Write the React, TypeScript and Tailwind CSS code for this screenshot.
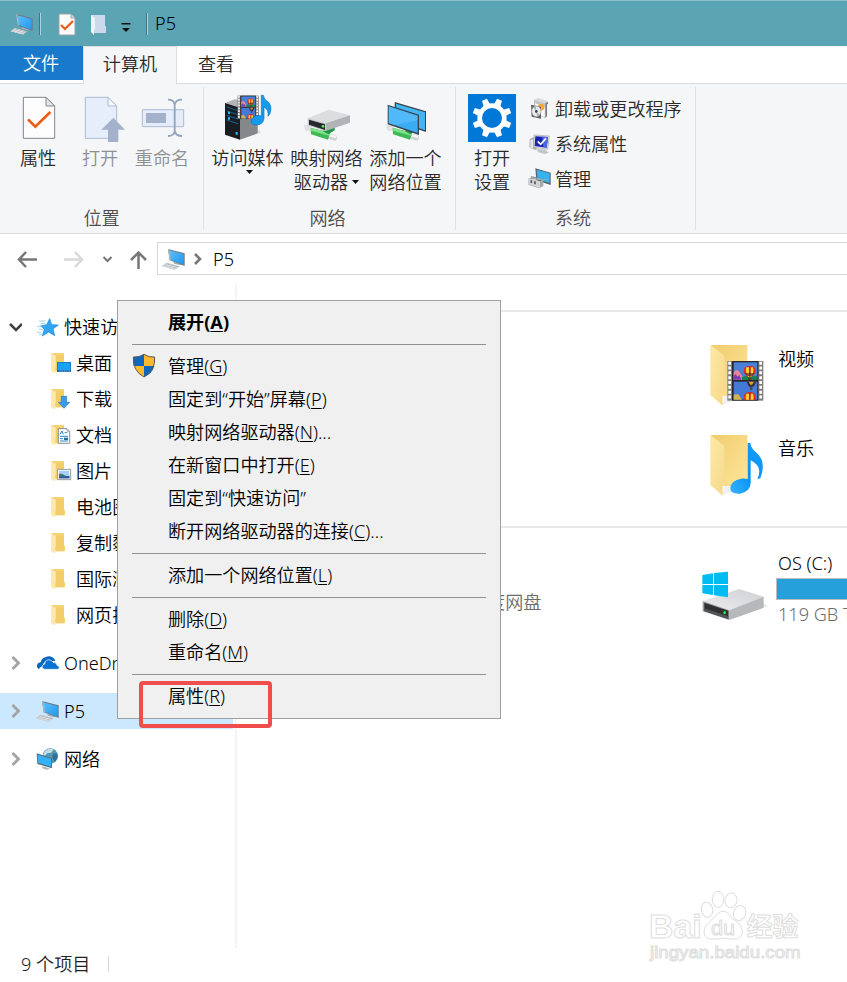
import React from "react";

const font = "font-['Noto_Sans','Noto_Sans_CJK_SC',sans-serif]";

function Computer({ className = "" }: { className?: string }) {
  return (
    <svg className={className} width="24" height="24" viewBox="108 177 72 72">
      <defs>
        <linearGradient id="screen" x1="0" y1="0" x2="1" y2="1">
          <stop offset="0" stopColor="#5cc0fb" />
          <stop offset="1" stopColor="#1f97ef" />
        </linearGradient>
      </defs>
      <path d="M142 221l14 5 14 0-6 6-20-5z" fill="#a9adb1" />
      <path d="M126 183l50 13v38l-45-17z" fill="#6c7b87" />
      <path d="M130 187l43 12v31l-40-15z" fill="url(#screen)" />
      <path d="M126 183l4 1 5 34-4-1z" fill="#aebbc4" />
      <path d="M108 235l14-11 39 11-15 10z" fill="#b4b8bc" />
      <path d="M115 234l35 9M120 230l34 9M126 227l-14 9M137 229l-14 10M148 232l-14 10" stroke="#eceeef" strokeWidth="2" />
    </svg>
  );
}

type Badge = "desktop" | "download" | "docs" | "pictures" | "none";

function SmallFolder({ badge }: { badge: Badge }) {
  return (
    <svg width="24" height="24" viewBox="150 33 72 72">
      <path d="M154 39h38v38h3v17h-32z" fill="#f5d474" />
      <path d="M168 46h24v48h-24z" fill="#edc862" opacity=".55" />
      <path d="M153 39l14 10v30l-2 3v20l-12-10z" fill="#ffe9a6" />
      {badge === "desktop" && (
        <>
          <rect x="171" y="66" width="42" height="30" fill="#1d6fb0" />
          <rect x="173" y="68" width="38" height="22" fill="#18a0fb" />
          <path d="M178 93h24M206 93h4" stroke="#9fe0ff" strokeWidth="2" strokeDasharray="4 3" />
        </>
      )}
      {badge === "download" && (
        <path d="M184 61h16v18h9l-17 18-17-18h9z" fill="#3c9be9" stroke="#267dcb" strokeWidth="2" />
      )}
      {badge === "docs" && (
        <>
          <path d="M175 50h26l8 8v36h-34z" fill="#fff" stroke="#8a8f94" strokeWidth="3" />
          <path d="M201 50v8h8" fill="none" stroke="#8a8f94" strokeWidth="2" />
          <path d="M180 67l6-10 4 10M194 62h8M180 73h24M180 80h9M180 87h24" stroke="#2584c6" strokeWidth="3" fill="none" />
          <path d="M192 77h12v7h-12z" fill="#2b6d8f" />
        </>
      )}
      {badge === "pictures" && (
        <>
          <rect x="173" y="64" width="39" height="31" fill="#fff" stroke="#989ca0" strokeWidth="3" />
          <rect x="177" y="68" width="31" height="23" fill="#a8d2f5" />
          <path d="M177 78q10-2 15 3t16 2v8h-31z" fill="#3f7378" />
          <path d="M177 87l31-3v7h-31z" fill="#2d5aa2" />
        </>
      )}
    </svg>
  );
}

function FilmStrip() {
  return (
    <>
      <rect x="113" y="93" width="108" height="119" fill="#7f7f7f" />
      <path d="M120 95v116M213 95v116" stroke="#fff" strokeWidth="8" strokeDasharray="9 5.5" />
      <rect x="127" y="93" width="79" height="119" fill="#282828" />
      <rect x="132" y="97" width="71" height="53" fill="#4b80d8" />
      <rect x="132" y="155" width="71" height="54" fill="#4579d6" />
      <path d="M132 127l8-8 8 5 6 10 8 8v8h-30z" fill="#e78695" />
      <path d="M132 138l6-6 5 8 6-5 6 14h-23z" fill="#783fb4" />
      <path d="M156 141l14-3 33 1v11h-46z" fill="#17804d" />
      <path d="M162 123q0-15 18-15t18 15q-1 11-14 18h-8q-13-7-14-18z" fill="#df2a25" />
      <path d="M170 112q-4 14 5 28h10q9-14 5-28z" fill="#ffd02e" />
      <path d="M178 109v31h5v-31z" fill="#bb2020" />
      <path d="M165 129h30l-8 9h-14z" fill="#3d3023" opacity=".65" />
      <path d="M176 143h9v7h-9z" fill="#64341b" />
      <path d="M171 155h28q-2 11-11 17h-7q-8-6-10-17z" fill="#373036" />
      <path d="M177 155l5 9h5l6-9z" fill="#e1a12e" />
      <path d="M181 173h7v6h-7z" fill="#672e1d" />
      <path d="M162 209v-8q2-15 18-15t18 15v8z" fill="#df2a25" />
      <path d="M170 191q-3 8-1 18h22q2-10-1-18z" fill="#ffd02e" />
      <path d="M178 187v22h5v-22z" fill="#bb2020" />
      <path d="M132 194l13-2 12 17h-25z" fill="#d5b44f" />
    </>
  );
}

function LargeFolder({ kind }: { kind: "video" | "music" }) {
  return (
    <svg width="60" height="70" viewBox="52 30 180 210">
      <defs>
        <linearGradient id="folderBack" x1="0" y1="0" x2="1" y2="1">
          <stop offset="0" stopColor="#efcc6d" />
          <stop offset="1" stopColor="#ffe69a" />
        </linearGradient>
        <linearGradient id="folderFront" x1="0" y1="0" x2="1" y2="1">
          <stop offset="0" stopColor="#ffe9a7" />
          <stop offset="1" stopColor="#f5d98b" />
        </linearGradient>
        <linearGradient id="note" x1="1" y1="0" x2="0" y2="1">
          <stop offset="0" stopColor="#159df9" />
          <stop offset=".55" stopColor="#0a93f5" />
          <stop offset="1" stopColor="#35b2ff" />
        </linearGradient>
      </defs>
      <path d="M98 226l40-17 10-10-44-2z" fill="#f1f1f1" />
      <path d="M63 45h110v153H63z" fill="url(#folderBack)" />
      <path d="M63 45l41 32v106q-5 5-5 12v32l-36-31z" fill="url(#folderFront)" />
      {kind === "video" ? (
        <FilmStrip />
      ) : (
        <path d="M174 69h8q2 16 17 28 33 27 13 78l-9 2q18-38-20-56v68q-1 26-32 32-29 2-29-17 2-23 32-28 10-2 20 1z" fill="url(#note)" />
      )}
    </svg>
  );
}

function DiskIcon() {
  return (
    <svg width="66" height="52" viewBox="36 90 198 156">
      <defs>
        <linearGradient id="diskTop" x1="0" y1="1" x2="1" y2="0">
          <stop offset="0" stopColor="#ededef" />
          <stop offset="1" stopColor="#cfd0d3" />
        </linearGradient>
      </defs>
      <path d="M117 240l109-38 10-4-20-10z" fill="#ececec" />
      <path d="M38 183l109-36 74 23-103 42z" fill="url(#diskTop)" />
      <path d="M118 211l103-41v33l-103 37z" fill="#b7b8bb" />
      <path d="M38 183l80 28v29l-80-26z" fill="#999b9e" />
      <path d="M43 188l72 24v25l-72-24z" fill="#2e3032" />
      <path d="M43 205l72 24v8l-72-24z" fill="#525456" />
      <circle cx="104" cy="218" r="4" fill="#2cff55" />
      <path d="M37 105l32-5v32H37zM72 99l42-4v37H72zM37 135h32v30l-32-5zM72 135h42v37l-42-6z" fill="#00bcf2" />
    </svg>
  );
}

function NetworkCable() {
  return (
    <>
      <path d="M298 123l20-1 8 18-22 1q-9-7-6-18z" fill="#dfe1e3" />
      <path d="M370 148l23 5q6 8-1 17l-24-6z" fill="#d0d2d4" />
      <path d="M376 151l18 4-2 7-20-5z" fill="#fafafa" />
      <path d="M317 131l58 15-6 21-51-16z" fill="#3fb955" />
      <path d="M319 132l56 15-2 8-55-15z" fill="#7ee28a" />
      <path d="M352 140l37-10v9l-19 12z" fill="#22954a" />
    </>
  );
}

const ServerIcon = () => (
  <svg width="79" height="48" viewBox="9 30 237 144">
    <path d="M104 167l65-21-12-12z" fill="#dadbde" />
    <path d="M60 57l30-11 62 8-45 18z" fill="#b2b4b7" />
    <path d="M104 72l54-13v89l-54 19z" fill="#85878a" />
    <path d="M60 57l45 14v96l-45-15z" fill="#191c20" />
    <path d="M65 69l34 11M65 81l34 11M65 94l34 11M65 108l34 11" stroke="#1689ce" strokeWidth="2" />
    <path d="M69 83h6v7h-6zM69 100h6v7h-6zM92 144h6v8h-6z" fill="#26bfff" />
    <g transform="translate(31 -20) scale(.59)"><FilmStrip /></g>
    <path d="M169 34h6q2 13 13 19 15 11 7 36l-6 8q3-20-12-28v34q-2 19-22 20-18 0-16-12 3-15 20-17l10 2z" fill="#1599ef" stroke="#0875c5" strokeWidth="2" />
  </svg>
);

const MapDriveIcon = () => (
  <svg width="79" height="48" viewBox="246 30 237 144">
    <NetworkCable />
    <path d="M308 103l62-26 65 17-73 24z" fill="#dcdddf" />
    <path d="M362 118l73-24v22l-73 25z" fill="#b1b3b6" />
    <path d="M308 102l54 16v24l-54-18z" fill="#c6c8ca" />
    <path d="M312 107l48 14v17l-48-16z" fill="#26292b" />
    <circle cx="354" cy="127" r="4" fill="#4aff52" />
  </svg>
);

const AddNetworkIcon = () => (
  <svg width="79" height="48" viewBox="483 30 237 144">
    <g transform="translate(246 0)"><NetworkCable /></g>
    <path d="M569 54l94 28v62l-94-32z" fill="#3b4249" />
    <path d="M573 59l87 26v54l-87-30z" fill="#43b5f4" />
    <path d="M548 62l94 30v61l-94-32z" fill="#39434b" />
    <path d="M551 67l87 28v52l-87-30z" fill="#39acf4" />
    <path d="M551 67l87 28v14l-70 15-17-7z" fill="#69c6fd" opacity=".5" />
  </svg>
);

const PropertiesIcon = () => (
  <svg width="62" height="48" viewBox="21 30 186 144">
    <path d="M70 40h68l26 26v97H70z" fill="#fdfdfd" stroke="#84878a" strokeWidth="3" />
    <path d="M138 40v26h26z" fill="#e4e6e8" stroke="#84878a" strokeWidth="3" />
    <path d="M84 106l22 22 45-44" fill="none" stroke="#f05a14" strokeWidth="8" />
  </svg>
);

const OpenIcon = () => (
  <svg width="62" height="48" viewBox="207 30 186 144">
    <path d="M256 40h68l26 26v97h-94z" fill="#e6eefb" stroke="#aebbd2" strokeWidth="3" />
    <path d="M324 40v26h26z" fill="#f5f8fd" stroke="#aebbd2" strokeWidth="3" />
    <path d="M340 101l35 36h-20v37h-31v-37h-20z" fill="#a3b1cb" />
  </svg>
);

const RenameIcon = () => (
  <svg width="62" height="48" viewBox="393 30 186 144">
    <path d="M427 77h124v51H427z" fill="#e5edfa" stroke="#aebbd2" strokeWidth="3" />
    <path d="M438 87h60v30h-60z" fill="#a3b1cb" />
    <path d="M504 47q18 0 20 15 3-15 22-15M524 60v83M504 156q18 0 20-15 3 15 22 15" fill="none" stroke="#92a3c0" strokeWidth="5.5" />
  </svg>
);

const teeth = [22.5, 67.5, 112.5, 157.5, 202.5, 247.5, 292.5, 337.5];

const SettingsIcon = () => (
  <svg width="48" height="48" viewBox="39 30 144 144">
    <path d="M39 30h144v144H39z" fill="#0078d7" />
    <circle cx="111" cy="102" r="37" fill="none" stroke="#fff" strokeWidth="14" />
    {teeth.map((angle) => (
      <path key={angle} d="M101 61l2-18h16l2 18z" fill="#fff" transform={`rotate(${angle} 111 102)`} />
    ))}
  </svg>
);

const UninstallIcon = () => (
  <svg width="24" height="24" viewBox="219 42 72 72">
    <path d="M237 50l13-5 29 10-8 6z" fill="#d8d9da" />
    <path d="M237 50l34 11v45l-35-16z" fill="#c3c5c7" />
    <path d="M271 61l8-5v6l-3 2v35l-5 7z" fill="#77797c" />
    <path d="M240 61l29 10v32l-28-12z" fill="#fff" />
    <circle cx="258" cy="73" r="10" fill="#f6a72f" />
    <path d="M228 65l30 7v35l-28-6z" fill="#5e6063" />
    <ellipse cx="244" cy="85" rx="14" ry="16" fill="#e8eaeb" stroke="#979b9e" strokeWidth="2" />
    <path d="M244 84l-10-11 8-4zM244 86l10 10-7 5z" fill="#adb5b5" />
    <ellipse cx="244" cy="85" rx="4" ry="5" fill="#454b50" />
  </svg>
);

const SystemIcon = () => (
  <svg width="24" height="24" viewBox="219 147 72 72">
    <path d="M224 169l14-8 7 4v36l-15-3-7-6z" fill="#a9abad" />
    <path d="M226 171l8-2v29l-8-4z" fill="#e4e4e5" />
    <path d="M247 197l24 3 10 9-11 4-22-6z" fill="#c2c5c7" />
    <path d="M237 156l46 3-5 40-42-7z" fill="#dfdfdf" stroke="#a7a7ad" strokeWidth="2" />
    <path d="M241 160l38 2-4 32-36-5z" fill="#1723ae" />
    <path d="M261 161l18 1-4 32-10-2z" fill="#4965ea" />
    <path d="M248 175l9 9 16-18" fill="none" stroke="#fff" strokeWidth="5" />
  </svg>
);

const ManageIcon = () => (
  <svg width="24" height="24" viewBox="219 252 72 72">
    <path d="M241 256l46 13v37l-43-14z" fill="#56636d" />
    <path d="M245 260l39 11v29l-37-12z" fill="#39b1ef" />
    <path d="M220 288l15-6 30 8 16-3-15 7-17-4z" fill="#a8abad" />
    <path d="M220 287l35 8 10-5v19l-13 7-32-11z" fill="#a5a9ac" />
    <path d="M220 287l35 8v20l-35-11z" fill="#d2d4d5" />
    <path d="M229 286v-5l15 3v6" fill="none" stroke="#8b8f92" strokeWidth="3" />
    <path d="M229 292v8M240 295v9" fill="none" stroke="#55595c" strokeWidth="5" />
  </svg>
);

function Down({ className = "" }: { className?: string }) {
  return (
    <svg className={className} width="7" height="4" viewBox="0 0 7 4">
      <path d="M0 0h7L3.5 4z" fill="#111" />
    </svg>
  );
}

function BigButton({ icon, lines, arrow, width, disabled }: {
  icon: React.ReactNode;
  lines: string[];
  arrow?: "below" | "inline";
  width: string;
  disabled?: boolean;
}) {
  return (
    <div className={`flex shrink-0 flex-col items-center ${width} ${disabled ? "text-[#8e9092]" : "text-[#2a2a2a]"}`}>
      {icon}
      <div className="mt-1 flex flex-col items-center whitespace-nowrap leading-6">
        {lines.map((line, i) => (
          <span key={line} className="flex items-center">
            {line}
            {arrow === "inline" && i === lines.length - 1 && <Down className="ml-1" />}
          </span>
        ))}
      </div>
      {arrow === "below" && <Down className="ml-1" />}
    </div>
  );
}

function RibbonGroup({ label, className, children }: { label: string; className: string; children: React.ReactNode }) {
  return (
    <div className={`flex shrink-0 flex-col border-r border-[#dfe2e5] ${className}`}>
      <div className="flex h-[116px]">{children}</div>
      <div className="text-center leading-6 text-[#4c4c4c]">{label}</div>
    </div>
  );
}

function Ribbon() {
  return (
    <div className="flex h-[150px] border-b border-[#d9dbdd] bg-[#f5f6f7] pb-[3px] pt-[3px]">
      <RibbonGroup label="位置" className="w-[204px] pt-[7px] [&>div:first-child]:pl-[7px]">
        <BigButton icon={<PropertiesIcon />} lines={["属性"]} width="w-[62px]" />
        <BigButton icon={<OpenIcon />} lines={["打开"]} width="w-[62px]" disabled />
        <BigButton icon={<RenameIcon />} lines={["重命名"]} width="w-[62px]" disabled />
      </RibbonGroup>
      <RibbonGroup label="网络" className="w-[252px] pt-[7px] pr-1 [&>div:first-child]:pl-1">
        <BigButton icon={<ServerIcon />} lines={["访问媒体"]} width="w-[79px]" arrow="below" />
        <BigButton icon={<MapDriveIcon />} lines={["映射网络", "驱动器"]} width="w-[79px]" arrow="inline" />
        <BigButton icon={<AddNetworkIcon />} lines={["添加一个", "网络位置"]} width="w-[79px]" />
      </RibbonGroup>
      <RibbonGroup label="系统" className="w-60 pt-[7px] pr-[5px] [&>div:first-child]:pl-3">
        <BigButton icon={<SettingsIcon />} lines={["打开", "设置"]} width="w-12" />
        <div className="-mt-[3px] ml-3 flex flex-col text-[#2a2a2a]">
          {[
            { icon: <UninstallIcon />, text: "卸载或更改程序" },
            { icon: <SystemIcon />, text: "系统属性" },
            { icon: <ManageIcon />, text: "管理" },
          ].map((item) => (
            <div key={item.text} className="flex h-[35px] items-center whitespace-nowrap leading-6">
              {item.icon}
              <span className="ml-[3px]">{item.text}</span>
            </div>
          ))}
        </div>
      </RibbonGroup>
    </div>
  );
}

function TitleBar() {
  return (
    <div className="flex h-[46px] items-center border-t border-[#8bbfc9] bg-[#5ba4b3] pl-[10px]">
      <Computer />
      <span className="ml-[5px] h-[22px] w-[2px] border-r border-[#aed2d9] bg-[#3d7884]" />
      <svg className="ml-[17px] mt-px" width="18" height="23" viewBox="0 0 18 23">
        <path d="M1 1h12l4 4v17H1z" fill="#fcfcfc" stroke="#98a2a7" />
        <path d="M13 1v4h4" fill="#ddd" stroke="#98a2a7" />
        <path d="M3 12l4 4 8-8" fill="none" stroke="#ee5a17" strokeWidth="2.2" />
      </svg>
      <svg className="ml-[15px] mt-[2px]" width="16" height="22" viewBox="0 0 16 22">
        <path d="M0 1h14v11h1v7H3z" fill="#ccd9ec" />
        <path d="M0 1l4 3v11l-1 1v5l-3-3z" fill="#eef3fa" />
      </svg>
      <svg className="ml-[14px] mt-[9px]" width="10" height="10" viewBox="0 0 10 10">
        <path d="M.5 0h9v1.500h-9zM1 5h8L5 9z" fill="#111" />
      </svg>
      <span className="ml-[15px] h-[22px] w-[2px] border-r border-[#aed2d9] bg-[#3d7884]" />
      <span className="mb-[2px] ml-[7px] leading-6 text-black">P5</span>
    </div>
  );
}

function Tabs() {
  return (
    <div className="flex h-[38px] border-b border-[#dadcde] bg-white leading-6">
      <div className="flex h-[34px] w-[83px] items-center justify-center bg-[#1979ca] pb-px pr-px text-white">文件</div>
      <div className="z-10 flex h-[38px] w-[94px] items-center justify-center border-x border-t border-[#dadcde] bg-[#f5f6f7] pb-[3px] text-[#2a2a2a]">计算机</div>
      <div className="flex h-[37px] w-[78px] items-center justify-center pb-[2px] text-[#2a2a2a]">查看</div>
    </div>
  );
}

function Chevron({ open }: { open?: boolean }) {
  return (
    <svg width="14" height="14" viewBox="0 0 14 14">
      {open ? (
        <path d="M2 4l6 6 6-6" fill="none" stroke="#404040" strokeWidth="2.5" />
      ) : (
        <path d="M4.5 1l6 6-6 6" fill="none" stroke="#a3a3a3" strokeWidth="2.8" />
      )}
    </svg>
  );
}

function AddressBar() {
  return (
    <div className="flex h-[49px] shrink-0 items-center bg-white">
      <svg className="ml-[17px] mt-px" width="132" height="30" viewBox="17 0 132 30" fill="none" strokeWidth="2.5">
        <path d="M37 15.5H19M26 8l-7 7.5 7 7.5" stroke="#777" />
        <path d="M64 15.5h18M75 8l7 7.5-7 7.5" stroke="#d9d9d9" />
        <path d="M103.5 13l4 4 4-4" stroke="#777" strokeWidth="2" />
        <path d="M138.5 25V9M131 16l7.5-7.5L146 16" stroke="#777" />
      </svg>
      <div className="ml-2 flex h-[33px] flex-1 items-center border border-r-0 border-[#d9d9d9]">
        <Computer className="ml-1" />
        <svg className="ml-2 mt-px" width="9" height="12" viewBox="0 0 9 12">
          <path d="M1 1l5 5-5 5" fill="none" stroke="#777" strokeWidth="2.6" />
        </svg>
        <span className="ml-[10px] leading-6">P5</span>
      </div>
    </div>
  );
}

const folders: { name: string; badge: Badge }[] = [
  { name: "桌面", badge: "desktop" },
  { name: "下载", badge: "download" },
  { name: "文档", badge: "docs" },
  { name: "图片", badge: "pictures" },
  { name: "电池图", badge: "none" },
  { name: "复制黏", badge: "none" },
  { name: "国际涨", badge: "none" },
  { name: "网页把", badge: "none" },
];

const QuickAccessIcon = () => (
  <svg width="24" height="24" viewBox="108 243 72 72">
    <path d="M149 254l6 18 20 1-16 12 5 20-18-11-19 12 6-20-11-10 18-4z" fill="#31a5f2" stroke="#1486d6" strokeWidth="2" />
    <path d="M117 261h20M121 268h15M112 277h18M117 286h13M111 295h13M117 302h9" stroke="#6fbced" strokeWidth="2" />
  </svg>
);

const OneDriveIcon = () => (
  <svg width="24" height="24" viewBox="108 33 72 72">
    <path d="M117 87q-8-4-6-12 2-7 11-8 2-12 14-15 11-6 20-1 9 4 10 13-7-2-12 2-9-7-19-1-7 5-7 13-8 3-11 9z" fill="#0a68c0" />
    <path d="M134 88q-7-1-8-7 0-7 8-9 0-10 10-13 10-1 15 8 11-1 12 9 7 2 7 7 0 5-6 5z" fill="#0b73d3" stroke="#fff" strokeWidth="2" />
  </svg>
);

const NetworkIcon = () => (
  <svg width="24" height="24" viewBox="108 321 72 72">
    <circle cx="151" cy="348" r="23" fill="#5297b6" />
    <path d="M139 330q12-7 22-2l-7 10-13 2-6 8-6-2q2-10 10-16z" fill="#c2dde3" />
    <path d="M159 340l13 2q3 14-8 23l-7-11z" fill="#2f7195" />
    <path d="M110 340l46 14v31l-44-13z" fill="#55707e" />
    <path d="M113 344l40 12v24l-39-12z" fill="#37b0fa" />
    <path d="M128 379l15 4 8 3-12 4-14-6z" fill="#b9bcbe" />
  </svg>
);

function TreeRow({ icon, text, open, selected, className = "" }: {
  icon: React.ReactNode;
  text: string;
  open?: boolean;
  selected?: boolean;
  className?: string;
}) {
  return (
    <div className={`flex h-9 w-[233px] shrink-0 items-center whitespace-nowrap ${selected ? "bg-[#cce8ff]" : ""} ${className}`}>
      <span className="ml-2 mr-[14px]"><Chevron open={open} /></span>
      {icon}
      <span className="ml-1 leading-6">{text}</span>
    </div>
  );
}

function Sidebar() {
  return (
    <div className="h-[665px] w-[237px] shrink-0 overflow-hidden border-r-2 border-[#f5f5f5] pt-[26px]">
      <TreeRow icon={<QuickAccessIcon />} text="快速访问" open />
      {folders.map((folder) => (
        <div key={folder.name} className="flex h-9 items-center pl-[50px]">
          <SmallFolder badge={folder.badge} />
          <span className="ml-[2px] leading-6">{folder.name}</span>
        </div>
      ))}
      <TreeRow className="mt-3" icon={<OneDriveIcon />} text="OneDrive" />
      <TreeRow className="mt-3" icon={<Computer />} text="P5" selected />
      <TreeRow className="mt-3" icon={<NetworkIcon />} text="网络" />
    </div>
  );
}

function Content() {
  return (
    <div className="flex min-w-0 flex-1 flex-col overflow-hidden">
      <div className="mt-[27px] flex h-[216px] flex-col gap-5 border-t-2 border-[#e8e8e8] pl-[470px] pt-7">
        <div className="flex h-[70px]">
          <LargeFolder kind="video" />
          <span className="ml-[11px] mt-[7px] whitespace-nowrap leading-6">视频</span>
        </div>
        <div className="flex h-[70px]">
          <LargeFolder kind="music" />
          <span className="ml-[11px] mt-[6px] whitespace-nowrap leading-6">音乐</span>
        </div>
      </div>
      <div className="flex border-t-2 border-[#e8e8e8] pl-[232px] pt-[23px]">
        <span className="mt-[39px] w-[233px] shrink-0 whitespace-nowrap leading-6 text-[#6d6d6d]">百度网盘</span>
        <span className="mt-[19px] shrink-0"><DiskIcon /></span>
        <div className="ml-2 flex w-[120px] shrink-0 flex-col whitespace-nowrap">
          <span className="pl-[2px] leading-6">OS (C:)</span>
          <div className="mt-[3px] h-[22px] border border-[#bcbcbc] bg-[#26a0da]" />
          <span className="mt-[2px] pl-[2px] leading-6 text-[#6d6d6d]">119 GB T</span>
        </div>
      </div>
    </div>
  );
}

type MenuEntry = { text: string; hotkey?: string; tail?: string; bold?: boolean; shield?: boolean } | null;

// null is a separator
const menu: MenuEntry[] = [
  { text: "展开", hotkey: "A", bold: true },
  null,
  { text: "管理", hotkey: "G", shield: true },
  { text: "固定到“开始”屏幕", hotkey: "P" },
  { text: "映射网络驱动器", hotkey: "N", tail: "..." },
  { text: "在新窗口中打开", hotkey: "E" },
  { text: "固定到“快速访问”" },
  { text: "断开网络驱动器的连接", hotkey: "C", tail: "..." },
  null,
  { text: "添加一个网络位置", hotkey: "L" },
  null,
  { text: "删除", hotkey: "D" },
  { text: "重命名", hotkey: "M" },
  null,
  { text: "属性", hotkey: "R" },
];

const ShieldIcon = () => (
  <svg width="24" height="26" viewBox="66 189 72 78">
    <path d="M102 193q15 10 32 8 3 41-32 60-35-19-32-60 17 2 32-8z" fill="#ffb92e" />
    <path d="M102 193v35H71q-2-12-1-27 17 2 32-8zM102 228h31q-6 23-31 33z" fill="#0f66bd" />
    <path d="M102 193q15 10 32 8 3 41-32 60-35-19-32-60 17 2 32-8z" fill="none" stroke="#5a5b5c" strokeWidth="3" />
  </svg>
);

function ContextMenu() {
  return (
    <div className="absolute left-[117px] top-[300px] h-[419px] w-[384px] border border-[#a0a0a0] bg-[#f0f0f0] pt-[5px] text-black">
      {menu.map((entry, i) =>
        entry ? (
          <div key={i} className={`flex h-[33px] items-center whitespace-nowrap pb-[2px] ${entry.bold ? "font-bold" : ""}`}>
            <span className="ml-[14px] w-9">{entry.shield && <ShieldIcon />}</span>
            <span className="leading-6">
              {entry.text}
              {entry.hotkey && <>(<span className="underline decoration-1 underline-offset-2">{entry.hotkey}</span>)</>}
              {entry.tail}
            </span>
          </div>
        ) : (
          <div key={i} className="mx-[14px] flex h-[11px] items-center">
            <div className="h-px w-full bg-[#919191]" />
          </div>
        )
      )}
    </div>
  );
}

function Watermark() {
  return (
    <svg className="absolute left-[640px] top-[885px]" width="180" height="85" viewBox="30 15 540 255" fill="#fff" stroke="#dedede" strokeWidth="3">
      <g className="font-['Liberation_Sans','Noto_Sans_CJK_SC',sans-serif] font-bold">
        <text x="57" y="175" fontSize="102" textLength="158" lengthAdjust="spacingAndGlyphs">Bai</text>
        <text x="350" y="169" fontSize="78" textLength="155" lengthAdjust="spacingAndGlyphs">经验</text>
      </g>
      <ellipse cx="231" cy="89" rx="17" ry="23" transform="rotate(-12 231 89)" />
      <ellipse cx="264" cy="58" rx="17" ry="24" />
      <ellipse cx="303" cy="61" rx="18" ry="22" transform="rotate(10 303 61)" />
      <ellipse cx="329" cy="99" rx="18" ry="23" transform="rotate(18 329 99)" />
      <path d="M280 94q14 0 28 22 31 20 29 40-3 26-32 21-25-4-49 0-32 4-34-20-1-20 28-42 15-21 30-21z" />
      <text x="243" y="164" fontSize="58" className="font-['Liberation_Sans',sans-serif]" textLength="72" lengthAdjust="spacingAndGlyphs">du</text>
      <text x="60" y="235" fontSize="49" className="font-['Liberation_Sans',sans-serif] font-normal" textLength="452" lengthAdjust="spacingAndGlyphs">jingyan.baidu.com</text>
    </svg>
  );
}

export default function App() {
  return (
    <div className={`relative flex h-[982px] w-[847px] flex-col overflow-hidden bg-white text-[18.1px] font-[350] text-black ${font}`}>
      <TitleBar />
      <Tabs />
      <Ribbon />
      <AddressBar />
      <div className="flex h-[665px] shrink-0">
        <Sidebar />
        <Content />
      </div>
      <div className="flex h-[34px] items-center pb-[2px] pl-[21px] text-[#222]">
        <span className="w-[87px] leading-6">9 个项目</span>
        <span className="h-4 w-px bg-[#d8d8d8]" />
      </div>
      <ContextMenu />
      <div className="absolute left-[139px] top-[681px] h-[47px] w-[133px] rounded-sm border-4 border-[#f04d4d]" />
      <Watermark />
    </div>
  );
}
